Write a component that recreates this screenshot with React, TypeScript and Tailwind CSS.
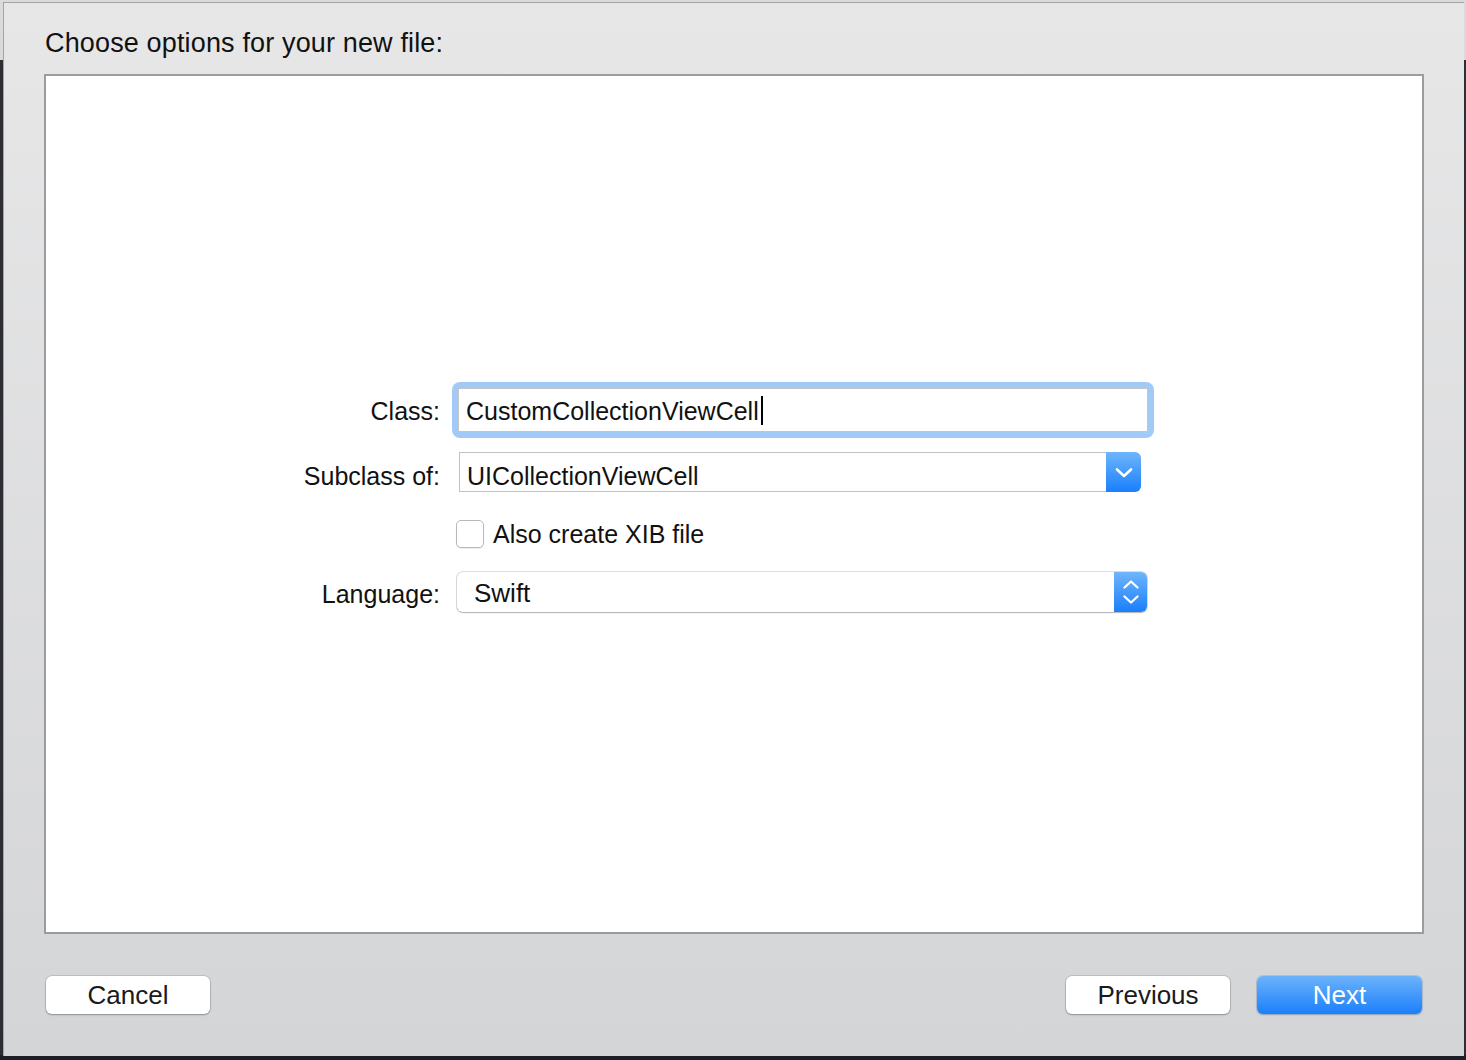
import React from "react";

const font = { fontFamily: '"Liberation Sans", Arial, sans-serif' };

function ChevronDown() {
  return (
    <svg width="18" height="11" viewBox="0 0 18 11" fill="none">
      <path d="M2 2.5l7 6.5 7-6.5" stroke="white" strokeWidth="2.6" strokeLinecap="round" strokeLinejoin="round" />
    </svg>
  );
}

function UpDown() {
  return (
    <svg width="18" height="28" viewBox="0 0 18 28" fill="none">
      <path d="M2.5 9.5l6.5-6 6.5 6" stroke="white" strokeWidth="2.3" strokeLinecap="round" strokeLinejoin="round" />
      <path d="M2.5 18.5l6.5 6 6.5-6" stroke="white" strokeWidth="2.3" strokeLinecap="round" strokeLinejoin="round" />
    </svg>
  );
}

export default function App() {
  return (
    <div
      style={font}
      className="w-[1466px] h-[1060px] overflow-hidden bg-[linear-gradient(to_bottom,#dadada_0px,#dadada_60px,#2c2e33_60px,#2c2e33_1055px,#1c1f26_1055px)] pt-[2px] pl-[3px] pr-[2px] pb-[4px]"
    >
      <div className="h-full flex flex-col border-t border-l border-[#a4a4a4] bg-[linear-gradient(to_bottom,#e7e7e8,#d4d5d7)] pl-[40px] pr-[40px] text-[#111]">
        <div className="h-[71px] pt-[24px] pl-[1px] text-[27px] leading-[32px] tracking-[0.15px]">
          Choose options for your new file:
        </div>
        <div className="h-[860px] border-2 border-[#9c9c9c] bg-white flex flex-col pt-[306px]">
          {/* Class */}
          <div className="flex items-center h-[56px]">
            <div className="w-[394px] text-right text-[25px] leading-[30px] pt-[2px]">Class:</div>
            <div className="ml-[12px] rounded-[8px] bg-[#a2caf6] p-[6px]">
              <div className="w-[690px] h-[44px] border border-[#c4c4c4] bg-white flex items-center pl-[7px] text-[25px] leading-[30px]">
                <span className="pt-[2px]">CustomCollectionViewCell</span>
                <span className="w-[2px] h-[29px] bg-black ml-[2px]" />
              </div>
            </div>
          </div>
          {/* Subclass */}
          <div className="flex items-center h-[40px] mt-[14px]">
            <div className="w-[394px] text-right text-[25px] leading-[30px] pt-[7px]">Subclass of:</div>
            <div className="ml-[19px] flex h-[40px]">
              <div className="w-[647px] h-[40px] border border-r-0 border-[#c2c2c2] bg-white flex items-center pl-[7px] pt-[7px] text-[25px] leading-[30px]">
                UICollectionViewCell
              </div>
              <div className="w-[35px] h-[40px] rounded-r-[6px] bg-[linear-gradient(to_bottom,#6fb5fb,#1a7ffb)] flex items-center justify-center">
                <ChevronDown />
              </div>
            </div>
          </div>
          {/* Checkbox */}
          <div className="flex items-center h-[28px] mt-[28px]">
            <div className="w-[394px]" />
            <div className="ml-[16px] w-[28px] h-[28px] rounded-[5px] border border-[#b8b8b8] bg-white shadow-[0_1px_1px_rgba(0,0,0,0.08)]" />
            <div className="ml-[9px] text-[25px] leading-[30px]">Also create XIB file</div>
          </div>
          {/* Language */}
          <div className="flex items-center h-[40px] mt-[24px]">
            <div className="w-[394px] text-right text-[25px] leading-[30px] pt-[3px]">Language:</div>
            <div className="ml-[17px] flex h-[40px] w-[690px] rounded-[6px] bg-white shadow-[0_0_0_1px_rgba(0,0,0,0.13),0_1px_1.5px_rgba(0,0,0,0.2)]">
              <div className="flex-1 flex items-center pl-[17px] pt-[1px] text-[26px] leading-[30px]">Swift</div>
              <div className="w-[33px] h-[40px] rounded-r-[6px] bg-[linear-gradient(to_bottom,#6fb5fb,#1a7ffb)] flex items-center justify-center">
                <UpDown />
              </div>
            </div>
          </div>
        </div>
        <div className="flex items-center pt-[42px] pl-[2px] pr-[2px]">
          <button className="w-[164px] h-[38px] rounded-[6px] bg-white text-[26px] leading-[30px] text-[#1a1a1a] shadow-[0_0_0_1px_rgba(0,0,0,0.1),0_1px_2px_rgba(0,0,0,0.25)]">
            Cancel
          </button>
          <div className="flex-1" />
          <button className="w-[164px] h-[38px] rounded-[6px] bg-white text-[26px] leading-[30px] text-[#1a1a1a] shadow-[0_0_0_1px_rgba(0,0,0,0.1),0_1px_2px_rgba(0,0,0,0.25)]">
            Previous
          </button>
          <button className="ml-[27px] w-[165px] h-[38px] rounded-[6px] bg-[linear-gradient(to_bottom,#6cb3fb,#1b7ffb)] text-[26px] leading-[30px] text-white shadow-[0_0_0_1px_rgba(0,80,200,0.15),0_1px_2px_rgba(0,0,0,0.2)]">
            Next
          </button>
        </div>
      </div>
    </div>
  );
}
